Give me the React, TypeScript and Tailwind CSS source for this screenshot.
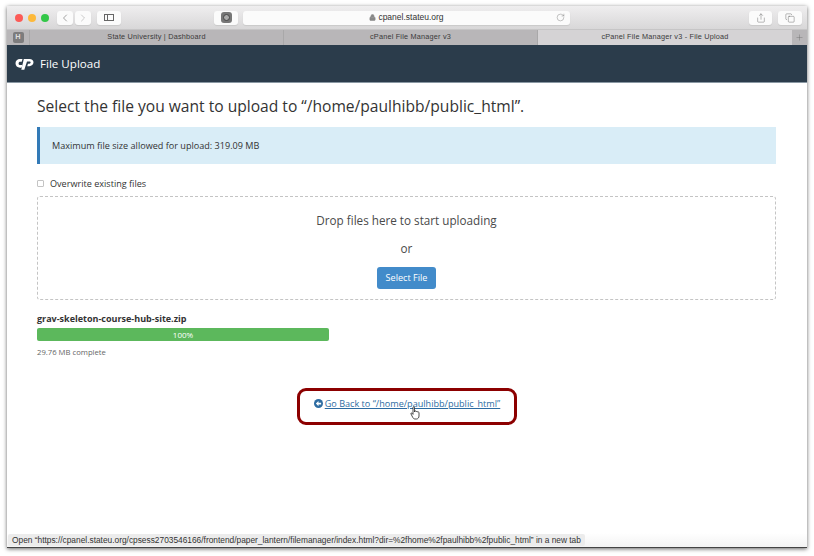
import React from 'react';
import { ChevronLeft, ChevronRight, Lock, RotateCw, Share, Copy, Plus } from 'lucide-react';

const ToolbarButton = ({ className, children }: { className: string; children: React.ReactNode }) => (
  <div className={`h-[14px] rounded-[3px] bg-[#fbfbfb] shadow-[0_1px_1px_#c9c9c9] flex items-center justify-center ${className}`}>
    {children}
  </div>
);

const tabs = ['State University | Dashboard', 'cPanel File Manager v3'];

const App = () => {
  return (
    <div className="w-[814px] h-[556px] bg-white pt-[6px] pl-[7px] overflow-hidden font-['Open_Sans',sans-serif]">
      <div className="relative w-[800px] h-[542px] flex flex-col bg-white shadow-[0_1px_4px_#666]">
        {/* Safari toolbar */}
        <div className="h-[23px] shrink-0 flex items-center pl-2 pr-[5px] bg-gradient-to-b from-[#efeeef] to-[#d8d7d8]">
          <div className="flex gap-[5px] mr-2">
            <span className="w-2 h-2 rounded-full bg-[#fc5b57]" />
            <span className="w-2 h-2 rounded-full bg-[#fdb93a]" />
            <span className="w-2 h-2 rounded-full bg-[#33c748]" />
          </div>
          <ToolbarButton className="w-[16px] mr-[2px]">
            <ChevronLeft size={12} strokeWidth={1.2} color="#666" />
          </ToolbarButton>
          <ToolbarButton className="w-[16px] mr-[6px]">
            <ChevronRight size={12} strokeWidth={1.2} color="#aaa" />
          </ToolbarButton>
          <ToolbarButton className="w-[24px] mr-[93px]">
            <span className="w-[10px] h-[7px] border border-[#666] flex">
              <span className="w-[3px] border-r border-[#666]" />
            </span>
          </ToolbarButton>
          <ToolbarButton className="w-[24px] mr-[5px]">
            <span className="w-[11px] h-[11px] rounded-[3px] bg-[#777] flex items-center justify-center">
              <span className="w-[7px] h-[7px] rounded-full bg-[#aaa] border border-[#444]" />
            </span>
          </ToolbarButton>
          <div className="relative w-[327px] h-[14px] rounded-[3px] bg-[#fbfbfb] shadow-[0_1px_1px_#c9c9c9] flex items-center justify-center gap-[2px] mr-[179px]">
            <Lock size={7} color="#888" fill="#888" />
            <span className="text-[8.500px] text-[#333] font-['Liberation_Sans',sans-serif]">cpanel.stateu.org</span>
            <RotateCw size={9} strokeWidth={1} color="#666" className="absolute right-[5px] top-[2px]" />
          </div>
          <ToolbarButton className="w-[23px] mr-[6px]">
            <Share size={10} strokeWidth={1} color="#555" />
          </ToolbarButton>
          <ToolbarButton className="w-[24px]">
            <Copy size={10} strokeWidth={1} color="#555" />
          </ToolbarButton>
        </div>

        {/* Tabs */}
        <div className="h-4 shrink-0 flex bg-[#b8b6b8] border-t border-[#c6c5c6] text-[7.300px] tracking-[0.2px] text-[#3a3a3a] font-['Liberation_Sans',sans-serif]">
          <div className="w-[23px] flex items-center justify-center border-r border-[#a9a8a9]">
            <span className="w-[11px] h-[11px] rounded-[2px] bg-[#7d7c7d] text-[#ddd] font-bold flex items-center justify-center">H</span>
          </div>
          {tabs.map((tab) => (
            <div key={tab} className="w-[254px] flex items-center justify-center border-r border-[#a9a8a9]">
              {tab}
            </div>
          ))}
          <div className="w-[254px] flex items-center justify-center bg-[#d5d3d5]">cPanel File Manager v3 - File Upload</div>
          <div className="flex-1 flex items-center justify-center bg-[#b8b6b8]">
            <Plus size={9} strokeWidth={1} color="#666" />
          </div>
        </div>

        {/* cPanel navbar */}
        <div className="h-[38px] shrink-0 flex items-center gap-[6px] pl-2 bg-[#2b3c4b] border-b border-[#8a98a3] text-white">
          <svg width="19" height="12" viewBox="0 0 19 12">
            <path d="M7.500 1H5C2.400 1 .5 2.800.5 5.300S2.400 9.700 5 9.700h1.500l1-2.700H5.200c-1 0-1.600-.7-1.600-1.600s.7-1.600 1.600-1.600h1.500z" fill="#fff" />
            <path d="M8.800 1h5.700c2.500 0 4 1.400 4 3.300 0 2.300-1.800 3.900-4.200 3.900h-2.100l.8-2.500h1.400c.8 0 1.200-.5 1.200-1.100s-.4-1-1.100-1h-2.500L9.300 11.800H6.300z" fill="#fff" />
          </svg>
          <span className="text-[11.600px]">File Upload</span>
        </div>

        {/* Page */}
        <div className="flex-1 flex flex-col pl-[30px] pr-[31px] text-[#333]">
          <h1 className="mt-[12px] text-[15.600px] leading-[22px] text-[#333]">
            Select the file you want to upload to “/home/paulhibb/public_html”.
          </h1>
          <div className="mt-[10px] h-[37px] flex items-center pl-3 bg-[#d9edf7] border-l-[3px] border-[#337ab7] text-[9.100px]">
            Maximum file size allowed for upload: 319.09 MB
          </div>
          <label className="mt-[13px] h-[13px] flex items-center gap-[6px] text-[9.100px]">
            <span className="w-[7px] h-[7px] border border-[#c4c4c4] rounded-[1px] bg-white" />
            Overwrite existing files
          </label>
          <div className="mt-[6px] h-[104px] flex flex-col items-center border border-dashed border-[#c4c4c4] rounded-[3px] text-[#4a4a4a]">
            <span className="mt-[15px] text-[11.700px] leading-[17px]">Drop files here to start uploading</span>
            <span className="mt-[11px] text-[11.700px] leading-[17px]">or</span>
            <button className="mt-[10px] w-[59px] h-[22px] rounded-[3px] bg-[#428bca] text-white text-[9.100px]">Select File</button>
          </div>
          <div className="mt-[12px] text-[9px] leading-[13px] font-bold">grav-skeleton-course-hub-site.zip</div>
          <div className="mt-[3px] w-[292px] h-[13px] rounded-[2px] bg-[#5cb85c] flex items-center justify-center text-white text-[8px]">100%</div>
          <div className="mt-[6px] text-[7.700px] leading-[11px] text-[#666]">29.76 MB complete</div>

          {/* Highlighted link */}
          <div className="mt-[30px] self-center ml-[1px] w-[220px] h-[37px] pb-[6px] rounded-[9px] border-[3px] border-[#8c0000] flex items-center justify-center gap-[2px] text-[9.100px] text-[#2d6ca2]">
            <span className="w-[9px] h-[9px] rounded-full bg-[#2d6ca2] flex items-center justify-center">
              <svg width="7" height="7" viewBox="0 0 8 8">
                <path d="M1 4l3-3v2h3v2H4v2z" fill="#fff" />
              </svg>
            </span>
            <span className="underline">Go Back to “/home/paulhibb/public_html”</span>
          </div>
        </div>

        {/* Hand cursor over the link */}
        <svg className="absolute left-[403px] top-[400px]" width="11" height="14" viewBox="0 0 11 14">
          <path d="M3 1.500c0-1 1.500-1 1.500 0V6l.5-1c.8-.3 1.200 0 1.300.6.700-.4 1.200-.2 1.300.4.700-.3 1.400 0 1.400.8v3.200c0 1.500-1 3-2.500 3H5c-1.200 0-1.800-.8-2.300-1.700L1 8c-.4-.8.400-1.300 1-.8l1 1.200z" fill="#fff" stroke="#222" strokeWidth="0.8" />
        </svg>

        {/* Status bar */}
        <div className="h-[15px] shrink-0 flex items-center bg-gradient-to-b from-white to-[#f3f3f3] border-b border-[#444]">
          <span className="h-[12px] ml-[1px] flex items-center px-[4px] bg-[#ececec] rounded-[2px] text-[8.350px] text-[#333] font-['Liberation_Sans',sans-serif]">
            Open “https://cpanel.stateu.org/cpsess2703546166/frontend/paper_lantern/filemanager/index.html?dir=%2fhome%2fpaulhibb%2fpublic_html” in a new tab
          </span>
        </div>
      </div>
    </div>
  );
};

export default App;
